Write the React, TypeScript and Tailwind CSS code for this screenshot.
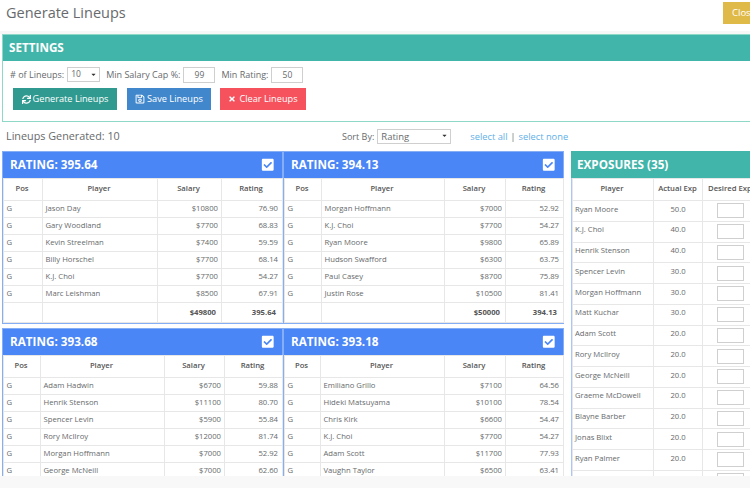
import React from "react";
import { FaCaretDown, FaCheckSquare, FaRegSave, FaSync, FaTimes } from "react-icons/fa";

type Row = [string, string, string];

const lineups = [
  {
    rating: "395.64",
    total: "$49800",
    widths: ["w-[39px]", "w-[115px]", "w-[64px]", "w-[61px]"],
    rows: [
      ["Jason Day", "$10800", "76.90"],
      ["Gary Woodland", "$7700", "68.83"],
      ["Kevin Streelman", "$7400", "59.59"],
      ["Billy Horschel", "$7700", "68.14"],
      ["K.J. Choi", "$7700", "54.27"],
      ["Marc Leishman", "$8500", "67.91"],
    ] as Row[],
  },
  {
    rating: "394.13",
    total: "$50000",
    widths: ["w-[37px]", "w-[123px]", "w-[61px]", "w-[58px]"],
    rows: [
      ["Morgan Hoffmann", "$7000", "52.92"],
      ["K.J. Choi", "$7700", "54.27"],
      ["Ryan Moore", "$9800", "65.89"],
      ["Hudson Swafford", "$6300", "63.75"],
      ["Paul Casey", "$8700", "75.89"],
      ["Justin Rose", "$10500", "81.41"],
    ] as Row[],
  },
  {
    rating: "393.68",
    total: "",
    widths: ["w-[37px]", "w-[124px]", "w-[60px]", "w-[58px]"],
    rows: [
      ["Adam Hadwin", "$6700", "59.88"],
      ["Henrik Stenson", "$11100", "80.70"],
      ["Spencer Levin", "$5900", "55.84"],
      ["Rory McIlroy", "$12000", "81.74"],
      ["Morgan Hoffmann", "$7000", "52.92"],
      ["George McNeill", "$7000", "62.60"],
    ] as Row[],
  },
  {
    rating: "393.18",
    total: "",
    widths: ["w-[36px]", "w-[124px]", "w-[61px]", "w-[58px]"],
    rows: [
      ["Emiliano Grillo", "$7100", "64.56"],
      ["Hideki Matsuyama", "$10100", "78.54"],
      ["Chris Kirk", "$6600", "54.47"],
      ["K.J. Choi", "$7700", "54.27"],
      ["Adam Scott", "$11700", "77.93"],
      ["Vaughn Taylor", "$6500", "63.41"],
    ] as Row[],
  },
];

const exposures: [string, string][] = [
  ["Ryan Moore", "50.0"],
  ["K.J. Choi", "40.0"],
  ["Henrik Stenson", "40.0"],
  ["Spencer Levin", "30.0"],
  ["Morgan Hoffmann", "30.0"],
  ["Matt Kuchar", "30.0"],
  ["Adam Scott", "20.0"],
  ["Rory McIlroy", "20.0"],
  ["George McNeill", "20.0"],
  ["Graeme McDowell", "20.0"],
  ["Blayne Barber", "20.0"],
  ["Jonas Blixt", "20.0"],
  ["Ryan Palmer", "20.0"],
  ["", ""],
];

const cell = "border border-[#e7e7e7] h-[17px] p-0 leading-none";
const head = "border border-[#e7e7e7] h-[22px] text-center font-semibold text-[#555] pb-[1px]";

const LineupCard = ({ item }: { item: (typeof lineups)[number] }) => {
  const columns = item.widths;
  return (
    <div className="border border-[#85aef5] w-[281px] flex flex-col">
      <div className="bg-[#4a86f5] h-[26px] flex items-center justify-between pl-[7px] pr-[8px] shrink-0">
        <span className="text-white font-bold text-[11.7px]">RATING: {item.rating}</span>
        <FaCheckSquare className="text-white text-[13.5px]" />
      </div>
      <table className="table-fixed border-collapse w-[279px] text-[7.7px] text-[#676a6c]">
        <thead>
          <tr>
            <th className={`${head} pr-[2px] ${columns[0]}`}>Pos</th>
            <th className={`${head} pr-[2px] ${columns[1]}`}>Player</th>
            <th className={`${head} pr-[2px] ${columns[2]}`}>Salary</th>
            <th className={`${head} pr-[2px] ${columns[3]}`}>Rating</th>
          </tr>
        </thead>
        <tbody>
          {item.rows.map((row, index) => (
            <tr key={index}>
              <td className={`${cell} pl-[2.5px]`}>G</td>
              <td className={`${cell} pl-[2.5px]`}>{row[0]}</td>
              <td className={`${cell} text-right pr-[3px]`}>{row[1]}</td>
              <td className={`${cell} text-right pr-[4px]`}>{row[2]}</td>
            </tr>
          ))}
          {item.total && (
            <tr>
              <td className="border border-[#e7e7e7] h-[20px]"></td>
              <td className="border border-[#e7e7e7]"></td>
              <td className="border border-[#e7e7e7] text-right pr-[5px] font-bold text-[#555]">{item.total}</td>
              <td className="border border-[#e7e7e7] text-right pr-[6px] font-bold text-[#555]">{item.rating}</td>
            </tr>
          )}
        </tbody>
      </table>
    </div>
  );
};

const ExposurePanel = () => (
  <div className="border-l border-[#a9c8f5] w-[210px] shrink-0 ml-[4px]">
    <div className="bg-[#42b5aa] h-[27px] flex items-center pl-[6px] -ml-px">
      <span className="text-white font-bold text-[11.7px]">EXPOSURES (35)</span>
    </div>
    <table className="table-fixed border-collapse w-[209px] text-[7.7px] text-[#676a6c]">
      <thead>
        <tr>
          <th className={`${head} pr-[2px] w-[81px]`}>Player</th>
          <th className={`${head} pr-[1px] w-[49px]`}>Actual Exp</th>
          <th className={`${head} w-[79px] text-left pl-[5px]`}>Desired Exp</th>
        </tr>
      </thead>
      <tbody>
        {exposures.map((row, index) => (
          <tr key={index}>
            <td className="border border-[#e7e7e7] h-[20.75px] pl-[2px] pb-[3px] leading-none">{row[0]}</td>
            <td className="border border-[#e7e7e7] text-center pb-[3px] leading-none">{row[1]}</td>
            <td className="border border-[#e7e7e7] pl-[14px] leading-none">
              <input className="block w-[26.5px] h-[15px] border border-[#cfcfcf] bg-white" />
            </td>
          </tr>
        ))}
      </tbody>
    </table>
  </div>
);

export default function App() {
  return (
    <div className="relative w-[750px] h-[488px] overflow-hidden bg-white font-['Open_Sans',sans-serif] text-[#676a6c]">
      <div className="h-[31px] flex items-start justify-between pl-[6px] border-b-[3px] border-[#f7f7f7] box-content">
        <h1 className="text-[14.5px] leading-[26px] font-normal text-[#676a6c]">Generate Lineups</h1>
        <button className="bg-[#dfba49] text-white text-[9.5px] h-[22px] mt-[2px] w-[60px] -mr-[33px] pl-[9px] text-left shrink-0">Close</button>
      </div>

      <div className="ml-[2px] border border-[#8ed8c8] border-r-0 h-[88px]">
        <div className="bg-[#42b5aa] h-[26px] flex items-center pl-[6px]">
          <span className="text-white font-bold text-[11.7px]">SETTINGS</span>
        </div>
        <div className="flex items-center h-[27px] pl-[7px] text-[9px]">
          <span>#&nbsp;of Lineups:</span>
          <div className="relative ml-[3px] w-[33px] h-[15px]">
            <select defaultValue="10" className="appearance-none block w-full h-full border border-[#cfcfcf] bg-white text-[8.5px] pl-[3px]">
              <option>10</option>
            </select>
            <FaCaretDown className="absolute right-[3px] top-[4px] text-[7px] text-[#333]" />
          </div>
          <span className="ml-[6px]">Min Salary Cap %:</span>
          <input readOnly value="99" className="ml-[3px] w-[32px] h-[16px] border border-[#cfcfcf] text-center text-[8.5px]" />
          <span className="ml-[6px]">Min Rating:</span>
          <input readOnly value="50" className="ml-[3px] w-[32px] h-[16px] border border-[#cfcfcf] text-center text-[8.5px]" />
        </div>
        <div className="flex items-start pl-[10px] text-[9.2px] text-white">
          <button className="flex items-center justify-center gap-[2px] w-[104px] h-[22px] bg-[#309a90]">
            <FaSync className="text-[9px]" /> Generate Lineups
          </button>
          <button className="flex items-center justify-center gap-[2px] w-[84px] h-[22px] ml-[10px] bg-[#4187cc]">
            <FaRegSave className="text-[10px]" /> Save Lineups
          </button>
          <button className="flex items-center justify-center gap-[3px] w-[86px] h-[22px] ml-[9px] bg-[#f6525e]">
            <FaTimes className="text-[8px]" /> Clear Lineups
          </button>
        </div>
      </div>

      <div className="flex items-center h-[29px] pl-[6px] text-[9px]">
        <span className="text-[10.8px] w-[336px]">Lineups Generated: 10</span>
        <span>Sort By:</span>
        <div className="relative ml-[3px] w-[74px] h-[15px]">
          <select defaultValue="Rating" className="appearance-none block w-full h-full border border-[#cfcfcf] bg-white text-[9.5px] pl-[3px]">
            <option>Rating</option>
          </select>
          <FaCaretDown className="absolute right-[3px] top-[3px] text-[7px] text-[#333]" />
        </div>
        <a className="ml-[19px] text-[9.3px] text-[#5fb0e8]">select all</a>
        <span className="mx-[3px]">|</span>
        <a className="text-[9.3px] text-[#5fb0e8]">select none</a>
      </div>

      <div className="flex h-[325px] overflow-hidden pl-[2px]">
        <div className="grid grid-cols-[281px_281px] gap-y-[4px] content-start w-[565px] shrink-0">
          {lineups.map((item) => (
            <LineupCard key={item.rating} item={item} />
          ))}
        </div>
        <ExposurePanel />
      </div>
      <div className="h-[12px] bg-[#f8f8f8]"></div>
    </div>
  );
}
